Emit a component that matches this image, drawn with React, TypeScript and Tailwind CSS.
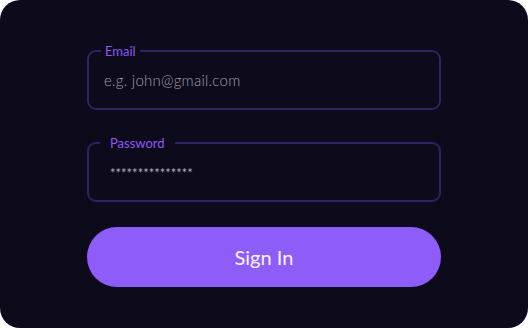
import { useState } from 'react';

const font = { fontFamily: 'Lato, "Noto Sans", sans-serif' };

const SignInCard = () => {
  const [email, setEmail] = useState('');

  return (
    <div className="w-[528px] h-[328px] bg-white">
      <div className="w-full h-full rounded-[20px] bg-[#0d0b1b] px-[87px] pt-[50px] flex flex-col" style={font}>
        {/* Email */}
        <div className="relative h-[60px] border-2 border-[#2d2262] rounded-[9px] flex items-center pl-[15px]">
          <span className="absolute -top-[9px] left-[12px] px-[4px] bg-[#0d0b1b] text-[13px] leading-4 text-[#8d58f4]">
            Email
          </span>
          <input
            value={email}
            onChange={(e) => setEmail(e.target.value)}
            placeholder="e.g. john@gmail.com"
            className="w-full bg-transparent outline-none text-[15px] font-light tracking-[0.25px] text-[#b3b0c2] placeholder:text-[#a19eb0]"
          />
        </div>

        {/* Password */}
        <div className="relative mt-8 h-[60px] border-2 border-[#2d2262] rounded-[9px] flex items-center pl-[21px] pt-[3px]">
          <span className="absolute -top-[9px] left-[11px] px-[10px] bg-[#0d0b1b] text-[13px] leading-4 text-[#8d58f4]">
            Password
          </span>
          <span className="text-[13px] text-[#aeabbb]">***************</span>
        </div>

        {/* Button */}
        <button className="mt-[25px] h-[60px] w-full rounded-full bg-[#8e5cf8] text-[20px] text-[#f7f3ff]">
          Sign In
        </button>
      </div>
    </div>
  );
};

export default function App() {
  return <SignInCard />;
}
